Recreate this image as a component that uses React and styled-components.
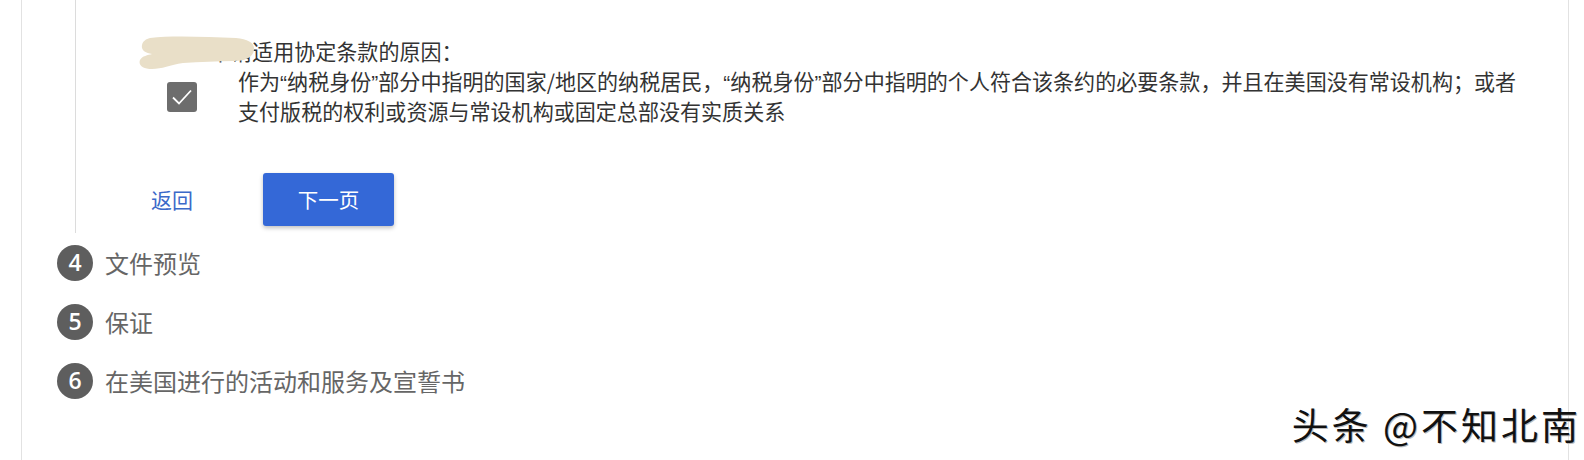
import React from "react";
import styled, { createGlobalStyle } from "styled-components";

const Global = createGlobalStyle`
  html, body { margin: 0; padding: 0; background: #fff; }
  body { font-family: "Noto Sans CJK SC", "Noto Sans", sans-serif; overflow: hidden; }
`;

const Page = styled.div`
  position: relative;
  width: 1584px;
  height: 460px;
  padding-left: 21px;
  box-sizing: border-box;
`;

const Frame = styled.div`
  width: 1548px;
  height: 460px;
  box-sizing: border-box;
  border-left: 1px solid #e2e2e2;
  border-right: 1px solid #e2e2e2;
`;

const StepBody = styled.div`
  margin-left: 53px;
  height: 233px;
  box-sizing: border-box;
  border-left: 1px solid #dcdcdc;
  padding-top: 37px;
`;

const Agreement = styled.div`
  position: relative;
  display: flex;
  align-items: flex-start;
`;

const Check = styled.div`
  width: 30px;
  height: 30px;
  margin: 45px 0 0 91px;
  border-radius: 3px;
  background: #6d6d6d;
  display: flex;
  align-items: center;
  justify-content: center;
  flex-shrink: 0;
`;

const Reason = styled.div`
  margin-left: 41px;
  font-size: 21.05px;
  line-height: 29.5px;
  color: #333;
  white-space: nowrap;
`;

const ReasonLabel = styled.div`
  text-indent: -28px;
`;

const Quote = styled.span`
  font-family: "Liberation Sans", sans-serif;
`;

const Smudge = styled.svg`
  position: absolute;
  left: 62px;
  top: -1px;
`;

const Actions = styled.div`
  display: flex;
  align-items: center;
  margin-top: 46px;
`;

const BackLink = styled.span`
  margin-left: 75px;
  width: 112px;
  font-size: 21px;
  color: #3b69c9;
`;

const NextButton = styled.button`
  width: 131px;
  height: 53px;
  border: none;
  border-radius: 3px;
  background: #3468d7;
  color: #fff;
  font-family: inherit;
  font-size: 20.5px;
  box-shadow: 0 2px 4px rgba(0, 0, 0, 0.25);
  padding: 0;
`;

const StepList = styled.div`
  display: flex;
  flex-direction: column;
`;

const StepRow = styled.div`
  display: flex;
  align-items: center;
  height: 59px;
  padding-left: 35px;
`;

const StepNum = styled.div`
  width: 36px;
  height: 36px;
  border-radius: 50%;
  background: #5e5e5e;
  color: #fff;
  font-family: "Open Sans", "Noto Sans", sans-serif;
  font-size: 23px;
  font-weight: 600;
  display: flex;
  align-items: center;
  justify-content: center;
  line-height: 1;
`;

const StepTitle = styled.span`
  margin-left: 12px;
  font-size: 24px;
  color: #666;
  line-height: 1;
`;

const Watermark = styled.div`
  position: absolute;
  right: 3px;
  top: 402px;
  font-size: 37px;
  letter-spacing: 3px;
  color: #111;
  text-shadow: 1px 1px 0 #bbb;
  line-height: 44px;
`;

const steps = [
  { n: 4, t: "文件预览" },
  { n: 5, t: "保证" },
  { n: 6, t: "在美国进行的活动和服务及宣誓书" },
];

export default function App() {
  return (
    <>
      <Global />
      <Page>
        <Frame>
          <StepBody>
            <Agreement>
              <Check>
                <svg width="22" height="18" viewBox="0 0 22 18">
                  <path d="M2 9.5 L8 15.5 L20 2.5" fill="none" stroke="#fff" strokeWidth="1.8" />
                </svg>
              </Check>
              <Reason>
                <ReasonLabel>申请适用协定条款的原因：</ReasonLabel>
                作为<Quote>“</Quote>纳税身份<Quote>”</Quote>部分中指明的国家/地区的纳税居民，<Quote>“</Quote>纳税身份<Quote>”</Quote>部分中指明的个人符合该条约的必要条款，并且在美国没有常设机构；或者
                <br />
                支付版税的权利或资源与常设机构或固定总部没有实质关系
              </Reason>
              <Smudge width="118" height="34" viewBox="0 0 118 34">
                <path
                  d="M12 2 C35 -1 70 1 98 2 C110 3 117 7 116 14 C115 22 106 25 96 25 C80 25 62 26 45 27 C32 29 24 33 14 33 C5 33 0 29 2 24 C4 20 10 19 14 18 C7 17 3 14 4 9 C5 5 8 3 12 2 Z"
                  fill="#e9dfc8"
                />
              </Smudge>
            </Agreement>
            <Actions>
              <BackLink>返回</BackLink>
              <NextButton>下一页</NextButton>
            </Actions>
          </StepBody>
          <StepList>
            {steps.map((s) => (
              <StepRow key={s.n}>
                <StepNum>{s.n}</StepNum>
                <StepTitle>{s.t}</StepTitle>
              </StepRow>
            ))}
          </StepList>
        </Frame>
        <Watermark>头条 @不知北南</Watermark>
      </Page>
    </>
  );
}
